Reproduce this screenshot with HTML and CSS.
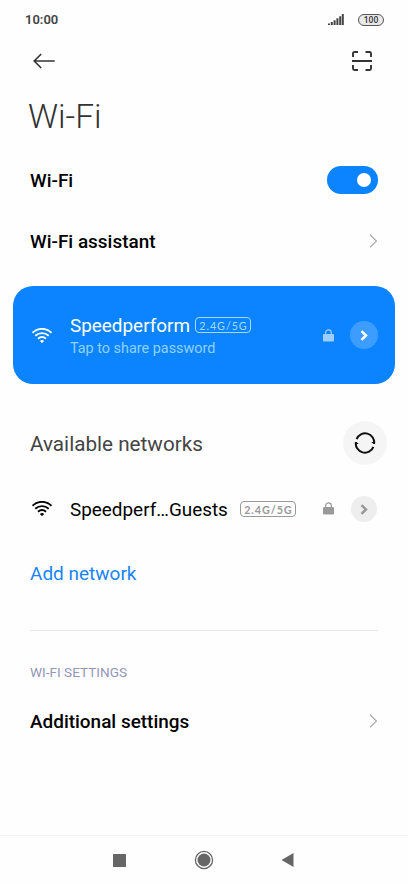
FILE: index.html
```html
<!DOCTYPE html>
<html lang="en">
<head>
<meta charset="utf-8">
<title>Wi-Fi</title>
<link rel="stylesheet" href="styles.css">
</head>
<body>
<svg class="defs" width="0" height="0" aria-hidden="true">
  <symbol id="wifi" viewBox="0 0 20 15">
    <g fill="none" stroke="currentColor" stroke-width="1.9">
      <path d="M.5 4.800C6-.5 14-.5 19.500 4.800"/>
      <path d="M3.300 7.800C7.200 4.200 12.800 4.200 16.700 7.800"/>
      <path d="M6 10.700C8.400 8.600 11.600 8.600 14 10.700"/>
    </g>
    <path d="M7.900 12.900Q10 11.300 12.100 12.900L10.500 14.700Q10 15 9.500 14.700Z" fill="currentColor"/>
  </symbol>
  <symbol id="lock" viewBox="0 0 11 13">
    <rect y="5" width="11" height="7.6" rx="1" fill="currentColor"/>
    <path d="M2.7 5.5V3.6a2.8 2.8 0 0 1 5.6 0v1.9" fill="none" stroke="currentColor" stroke-width="1.2"/>
  </symbol>
  <symbol id="chevron" viewBox="0 0 9 14">
    <path d="M1 .7 7.5 7 1 13.3" fill="none" stroke="currentColor" stroke-width="1.2"/>
  </symbol>
  <symbol id="go" viewBox="0 0 8 11">
    <path d="M1.5 1.1 6 5.5 1.5 9.9" fill="none" stroke="currentColor" stroke-width="2.5"/>
  </symbol>
</svg>
<div class="screen">
  <header class="status">
    <span class="time">10:00</span>
    <svg class="signal" width="16" height="12" viewBox="0 0 16 12" fill="#444"><path d="M0 9.500h2V11H0zM2.800 8h2v3h-2zM5.600 6.200h2V11h-2zM8.400 4.200h2V11h-2zM11.200 2.200h2V11h-2zM13.800 0h2v11h-2z"/></svg>
    <span class="battery">100</span>
  </header>
  <div class="toolbar">
    <svg width="22" height="16" viewBox="0 0 22 16" fill="none" stroke="#333" stroke-width="1.6"><path d="M8.200 1 1.200 8l7 7M1.400 8H21.700"/></svg>
    <svg width="22" height="20" viewBox="0 0 22 20" fill="none" stroke="#333" stroke-width="1.9"><path d="M2 6V2.500Q2 1 3.500 1H7M14.500 1H18.500Q20 1 20 2.500V6M2 14V17.500Q2 19 3.500 19H7M14.500 19H18.500Q20 19 20 17.500V14M1 10H21"/></svg>
  </div>
  <h1>Wi-Fi</h1>
  <div class="row first"><span class="label">Wi-Fi</span><span class="toggle"></span></div>
  <div class="row"><span class="label">Wi-Fi assistant</span><svg class="chevron" width="9" height="14"><use href="#chevron"/></svg></div>
  <section class="connected">
    <svg class="wifi" width="20" height="15"><use href="#wifi"/></svg>
    <div class="network">
      <div class="name-line"><span class="name">Speedperform</span><span class="badge">2.4G/5G</span></div>
      <div class="share">Tap to share password</div>
    </div>
    <svg class="lock" width="11" height="13"><use href="#lock"/></svg>
    <span class="go"><svg width="8" height="11"><use href="#go"/></svg></span>
  </section>
  <div class="available"><h2>Available networks</h2>
    <span class="refresh"><svg width="22" height="22" viewBox="0 0 22 22" fill="none" stroke="#111" stroke-width="2"><path d="M2.600 7.200A9.100 9.100 0 0 1 20.100 11.800M19.400 14.800A9.100 9.100 0 0 1 1.900 10.200"/><path d="M17.200 10.200 20.200 12.300 21 9.500ZM4.800 11.800 1.800 9.700 1 12.500Z" fill="#111" stroke="none"/></svg></span>
  </div>
  <div class="guest">
    <svg class="wifi" width="20" height="15"><use href="#wifi"/></svg>
    <div class="network name-line"><span class="name">Speedperf…Guests</span><span class="badge">2.4G/5G</span></div>
    <svg class="lock" width="11" height="13"><use href="#lock"/></svg>
    <span class="go"><svg width="8" height="11"><use href="#go"/></svg></span>
  </div>
  <div class="add"><span>Add network</span></div>
  <div class="divider"></div>
  <h3>WI-FI SETTINGS</h3>
  <div class="row"><span class="label">Additional settings</span><svg class="chevron" width="9" height="14"><use href="#chevron"/></svg></div>
  <nav>
    <svg width="13" height="13"><rect width="13" height="13" rx=".5" fill="#666"/></svg>
    <svg width="20" height="20" viewBox="0 0 20 20"><circle cx="10" cy="10" r="8.600" fill="none" stroke="#666" stroke-width="1.300"/><circle cx="10" cy="10" r="6.500" fill="#666"/></svg>
    <svg width="13" height="14" viewBox="0 0 13 14"><path d="M.5 7 12.500 0V14Z" fill="#666"/></svg>
  </nav>
</div>
</body>
</html>
```
FILE: styles.css
```css
* { box-sizing: border-box; }
body { margin: 0; background: #fefefe; font-family: Roboto, "Liberation Sans", sans-serif; color: #000; }
svg { display: block; flex: none; }
.defs { position: absolute; }
.screen { width: 408px; height: 884px; display: flex; flex-direction: column; overflow: hidden; white-space: nowrap; }
.status { height: 39px; padding: 0 24px 0 25px; display: flex; align-items: center; }
.time { flex: 1; font-size: 13px; font-weight: 600; color: #444; }
.signal { margin-right: 14px; }
.battery { width: 26px; height: 12px; border: 1px solid #555; border-radius: 6px; background: #e9e9e9; color: #333; font-size: 8.5px; font-weight: 500; line-height: 11px; text-align: center; }
.toolbar { height: 42px; padding: 1px 35px 0 33px; display: flex; align-items: center; justify-content: space-between; }
h1 { height: 69px; margin: 0; padding-left: 28px; font-size: 33.500px; font-weight: 300; line-height: 72px; color: #333; }
.row { height: 60px; padding: 0 30px; display: flex; align-items: center; justify-content: space-between; }
.first { height: 61px; }
.label { font-size: 18.950px; font-weight: 500; }
.toggle { width: 51px; height: 28px; margin-top: -1px; padding: 7px; border-radius: 14px; background: #0d84ff; display: flex; justify-content: flex-end; }
.toggle::after { content: ""; width: 14px; height: 14px; border-radius: 50%; background: #fff; }
.chevron { color: #aaa; }
.connected { height: 98px; margin: 15px 13px 0; padding: 0 17px 0 19px; border-radius: 20px; background: #0d84ff; color: #fff; display: flex; align-items: center; }
.wifi { margin-right: 18px; }
.guest .wifi { margin-top: -1px; }
.network { flex: 1; }
.name-line { display: flex; align-items: center; }
.name { font-size: 18.900px; line-height: 24px; padding-top: 2px; }
.badge { width: 56px; height: 16px; border: 1px solid currentColor; border-radius: 4px; font: 700 10.800px/15px Lato, sans-serif; letter-spacing: .9px; text-indent: 1px; text-align: center; color: #999; }
.connected .badge { margin-left: 5px; font-weight: 400; color: #a5d8ff; }
.share { font-size: 14.400px; line-height: 21px; color: #8fd0ff; }
.lock { margin-right: 17px; color: #999; }
.guest .lock { margin-top: -1px; }
.connected .lock { margin-right: 16px; color: #9eceff; }
.go { width: 26px; height: 26px; border-radius: 50%; background: #eee; color: #999; display: flex; align-items: center; justify-content: center; }
.connected .go { width: 28px; height: 28px; background: #3d9dff; color: #fff; }
.available { height: 60px; margin-top: 29px; padding: 0 21px 0 30px; display: flex; align-items: center; justify-content: space-between; }
h2 { margin: 0; padding-top: 2px; font-size: 20.700px; font-weight: 400; color: #444; }
.refresh { width: 44px; height: 44px; border-radius: 50%; background: #f5f5f5; display: flex; align-items: center; justify-content: center; }
.guest { height: 72px; padding: 0 31px 0 32px; display: flex; align-items: center; }
.guest .badge { margin-left: 12px; }
.add { height: 58px; padding-left: 30px; font-size: 19px; line-height: 58px; color: #1a84f5; }
.divider { height: 1px; margin: 27px 30px 0; background: #e8e8e8; }
h3 { height: 60px; margin: 0; padding: 23px 0 0 30px; font-size: 13.600px; font-weight: 400; line-height: 37px; color: #9396b8; }
nav { height: 49px; margin-top: auto; padding: 0 114px 0 113px; border-top: 1px solid #f3f3f3; display: flex; align-items: center; justify-content: space-between; }
```
